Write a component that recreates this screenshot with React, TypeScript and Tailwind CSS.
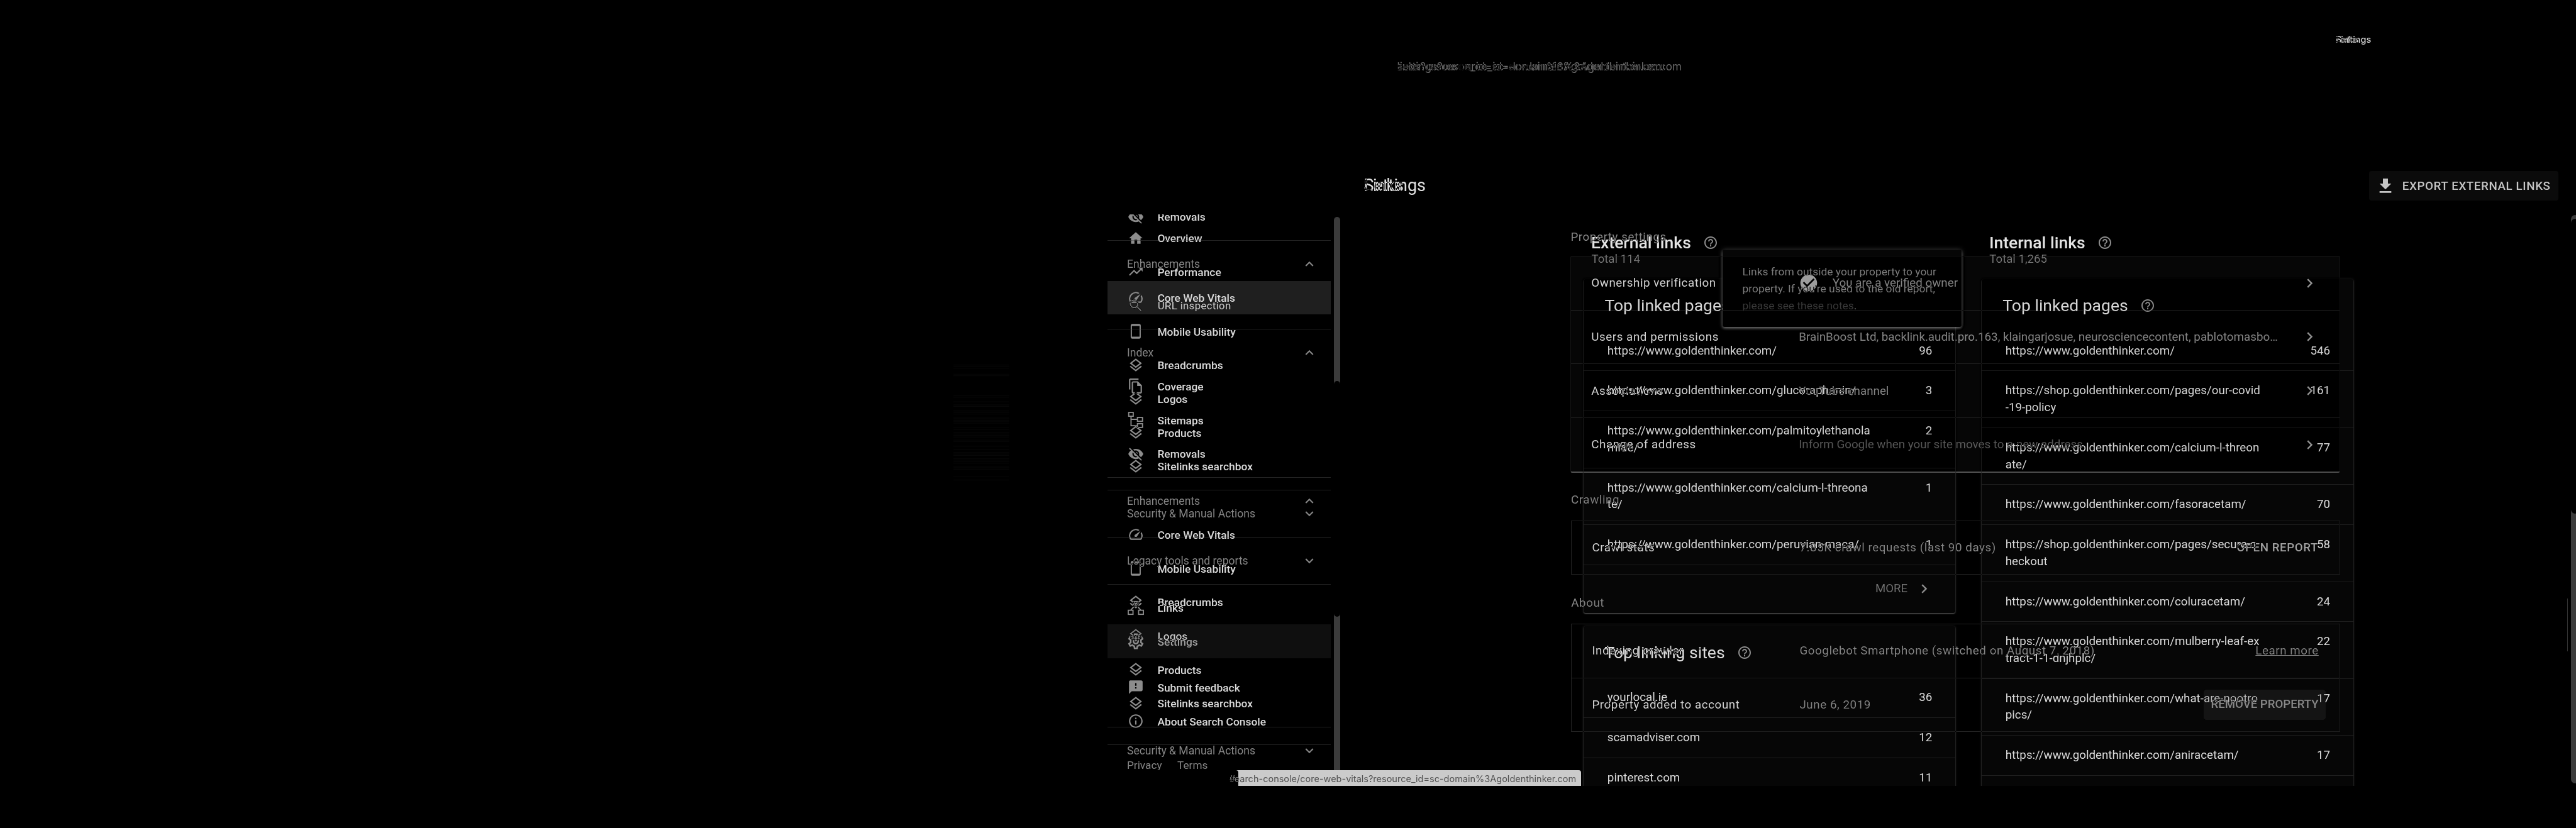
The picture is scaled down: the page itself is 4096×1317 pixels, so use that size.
import type { ReactNode } from "react";
import {
  MdCheckCircle,
  MdChevronRight,
  MdExpandLess,
  MdExpandMore,
  MdFeedback,
  MdFileDownload,
  MdHelpOutline,
  MdHome,
  MdInfoOutline,
  MdOutlineFileCopy,
  MdOutlineLayers,
  MdOutlineSettings,
  MdOutlineSpeed,
  MdSearch,
  MdTrendingUp,
  MdVisibilityOff,
} from "react-icons/md";

/* ---------- icons ---------- */

const SitemapIcon = () => (
  <svg viewBox="0 0 24 24" className="h-full w-full" fill="none" stroke="currentColor" strokeWidth="1.7">
    <rect x="1.6" y="0.9" width="6.6" height="5.6" />
    <rect x="14.4" y="8.3" width="7.4" height="5.6" />
    <rect x="14.4" y="17.4" width="7.4" height="5.6" />
    <path d="M5 6.5V20.4H14.4M5 11.1H14.4" />
  </svg>
);

const LinksIcon = () => (
  <svg viewBox="0 0 24 24" className="h-full w-full" fill="none" stroke="currentColor" strokeWidth="1.7">
    <rect x="8.8" y="2.6" width="6.4" height="6.4" />
    <rect x="0.9" y="15.4" width="7" height="6" />
    <rect x="16.1" y="15.4" width="7" height="6" />
    <path d="M4.6 15.4L9.6 9.6M19.4 15.4L14.4 9.6" />
  </svg>
);

const PhoneIcon = () => (
  <svg viewBox="0 0 24 24" className="h-full w-full" fill="none" stroke="currentColor">
    <rect x="5.4" y="2" width="13" height="20" rx="1.6" strokeWidth="1.8" />
    <path d="M5.4 3.1H18.4M5.4 20.9H18.4" strokeWidth="2" />
  </svg>
);

const full = "h-full w-full";
const ICONS: Record<string, ReactNode> = {
  Overview: <MdHome className={full} />,
  Performance: <MdTrendingUp className={full} />,
  "URL inspection": <MdSearch className={full} />,
  Coverage: <MdOutlineFileCopy className={full} />,
  Sitemaps: <SitemapIcon />,
  Removals: <MdVisibilityOff className={full} />,
  "Core Web Vitals": <MdOutlineSpeed className={full} />,
  "Mobile Usability": <PhoneIcon />,
  Breadcrumbs: <MdOutlineLayers className={full} />,
  Logos: <MdOutlineLayers className={full} />,
  Products: <MdOutlineLayers className={full} />,
  "Sitelinks searchbox": <MdOutlineLayers className={full} />,
  Links: <LinksIcon />,
  Settings: <MdOutlineSettings className="h-full w-full scale-[1.16]" />,
  "Submit feedback": <MdFeedback className={full} />,
  "About Search Console": <MdInfoOutline className={full} />,
};

/* ---------- sidebar ---------- */

function NavItem({ label, tone = "text-[#dadada]" }: { label: string; tone?: string }) {
  return (
    <div className={`flex h-[53.64px] shrink-0 items-center pl-[32px] ${tone}`}>
      <span className="h-[26px] w-[26px] text-[#8c8c8c]">{ICONS[label]}</span>
      <span className="ml-[21.7px] pt-[1.4px] text-[17.4px] font-medium">{label}</span>
    </div>
  );
}

function NavLabel({ label, open = false }: { label: string; open?: boolean }) {
  return (
    <div className="flex h-[53.64px] shrink-0 items-center justify-between pl-[31.3px] pr-[20.6px] text-[#868686]">
      <span className="pt-[1.4px] text-[17.55px]">{label}</span>
      {open ? <MdExpandLess className="h-[26px] w-[26px]" /> : <MdExpandMore className="h-[26px] w-[26px]" />}
    </div>
  );
}

const Divider = () => (
  <div className="h-[21.4px] shrink-0 pt-[10.2px]">
    <div className="h-px bg-[#222222]" />
  </div>
);

const NavItems = ({ labels }: { labels: string[] }) => (
  <>
    {labels.map((l) => (
      <NavItem key={l} label={l} />
    ))}
  </>
);

const ENHANCEMENTS = ["Mobile Usability", "Breadcrumbs", "Logos", "Products", "Sitelinks searchbox"];

function SidebarTop() {
  return (
    <nav className="flex w-[355.4px] shrink-0 flex-col overflow-hidden pt-[10.5px]">
      <NavItems labels={["Overview", "Performance", "URL inspection"]} />
      <Divider />
      <NavLabel label="Index" open />
      <NavItems labels={["Coverage", "Sitemaps", "Removals"]} />
      <Divider />
      <NavLabel label="Enhancements" open />
      <NavItems labels={["Core Web Vitals", ...ENHANCEMENTS]} />
      <Divider />
      <NavLabel label="Security & Manual Actions" />
    </nav>
  );
}

function SidebarBottom() {
  return (
    <nav className="w-[355.4px] shrink-0 overflow-hidden">
      <div className="-mt-[23.3px] flex flex-col">
        <NavItem label="Removals" />
        <Divider />
        <NavLabel label="Enhancements" open />
        <NavItem label="Core Web Vitals" tone="bg-[#1f1f1f] text-[#dadada]" />
        <NavItems labels={ENHANCEMENTS} />
        <Divider />
        <NavLabel label="Security & Manual Actions" />
        <Divider />
        <NavLabel label="Legacy tools and reports" />
        <Divider />
        <NavItem label="Links" />
        <NavItem label="Settings" tone="bg-[#0f0f0f] text-[#a0a0a0]" />
        <div className="h-[19.6px]" />
        <NavItems labels={["Submit feedback", "About Search Console"]} />
        <Divider />
        <div className="flex gap-[24.5px] pl-[31.3px] pt-[9px] text-[17.2px] leading-[26px] text-[#868686]">
          <span>Privacy</span>
          <span>Terms</span>
        </div>
      </div>
    </nav>
  );
}

/* ---------- shared page frame ---------- */

type FrameProps = {
  title: string;
  url: string;
  action?: ReactNode;
  sidebar: ReactNode;
  navThumb: string;
  pageThumb: string;
  status: ReactNode;
  className: string;
  children: ReactNode;
};

function Frame({ title, url, action, sidebar, navThumb, pageThumb, status, className, children }: FrameProps) {
  return (
    <div className={`absolute inset-0 flex flex-col bg-black ${className}`}>
      <div className="flex h-[84.4px] items-center pl-[3714px] pt-[42.2px] font-['Inter'] text-[14.43px] font-medium text-[#d4d4d4]">
        {title}
      </div>
      <div className="flex h-[42.6px] items-center pl-[2221.5px] font-['Inter'] text-[17.09px] text-[#6a6a6a]">{url}</div>
      <div className="flex h-[214.3px] items-center justify-between pl-[2168.4px] pr-[28px] pt-[122.9px]">
        <h1 className="text-[27px] text-[#e0e0e0]">{title}</h1>
        {action}
      </div>
      <div className="relative flex h-[908.8px] overflow-hidden pl-[1760.7px]">
        {sidebar}
        <div className="ml-[5.2px] w-[9.7px] shrink-0">
          <div className={`w-full rounded-full bg-[#3b3b3b] ${navThumb}`} />
        </div>
        <main className="min-w-0 flex-1">{children}</main>
        <div className="w-[8.5px] shrink-0 overflow-hidden">
          <div className={`w-[13px] rounded-full bg-[#3b3b3b] ${pageThumb}`} />
        </div>
        {status}
      </div>
    </div>
  );
}

/* ---------- links report ---------- */

type Row = { lines: string[]; value: string };

const EXTERNAL: Row[] = [
  { lines: ["https://www.goldenthinker.com/"], value: "96" },
  { lines: ["https://www.goldenthinker.com/glucoraphanin/"], value: "3" },
  { lines: ["https://www.goldenthinker.com/palmitoylethanola", "mide/"], value: "2" },
  { lines: ["https://www.goldenthinker.com/calcium-l-threona", "te/"], value: "1" },
  { lines: ["https://www.goldenthinker.com/peruvian-maca/"], value: "1" },
];

const SITES: Row[] = [
  { lines: ["yourlocal.ie"], value: "36" },
  { lines: ["scamadviser.com"], value: "12" },
  { lines: ["pinterest.com"], value: "11" },
];

const INTERNAL: Row[] = [
  { lines: ["https://www.goldenthinker.com/"], value: "546" },
  { lines: ["https://shop.goldenthinker.com/pages/our-covid", "-19-policy"], value: "161" },
  { lines: ["https://www.goldenthinker.com/calcium-l-threon", "ate/"], value: "77" },
  { lines: ["https://www.goldenthinker.com/fasoracetam/"], value: "70" },
  { lines: ["https://shop.goldenthinker.com/pages/secure-c", "heckout"], value: "58" },
  { lines: ["https://www.goldenthinker.com/coluracetam/"], value: "24" },
  { lines: ["https://www.goldenthinker.com/mulberry-leaf-ex", "tract-1-1-dnjhplc/"], value: "22" },
  { lines: ["https://www.goldenthinker.com/what-are-nootro", "pics/"], value: "17" },
  { lines: ["https://www.goldenthinker.com/aniracetam/"], value: "17" },
  { lines: [""], value: "" },
];

const Help = () => <MdHelpOutline className="ml-[19px] h-[24px] w-[24px] shrink-0 text-[#8c8c8c]" />;

function LinksCard({ title, rows, more = false }: { title: string; rows: Row[]; more?: boolean }) {
  return (
    <section className="rounded-[3px] bg-[#060606] shadow-[0_1px_2px_rgba(255,255,255,0.34),0_0_4px_rgba(255,255,255,0.1)]">
      <div className="flex h-[82.8px] items-center pl-[33px] pt-[1.2px] text-[26.5px] text-[#dcdcdc]">
        {title}
        <Help />
      </div>
      {rows.map((r, i) => (
        <div
          key={i}
          className="flex justify-between border-b border-[#1e1e1e] pb-[17.9px] pl-[37.4px] pr-[36.6px] pt-[18px] text-[18.77px] leading-[26.8px] text-[#dadada]"
        >
          <div>
            {r.lines.map((l) => (
              <div key={l} className="min-h-[26.8px]">
                {l}
              </div>
            ))}
          </div>
          <div>{r.value}</div>
        </div>
      ))}
      {more && (
        <div className="flex h-[76.2px] items-center justify-end gap-[12px] pr-[34.7px] text-[18.6px] text-[#6e6e6e]">
          MORE
          <MdChevronRight className="h-[29px] w-[29px] text-[#8c8c8c]" />
        </div>
      )}
    </section>
  );
}

function LinksColumn({ title, total, children }: { title: string; total: string; children: ReactNode }) {
  return (
    <div className="w-[590.4px] shrink-0">
      <div className="pb-[22.1px] pl-[11.6px] pt-[28.3px]">
        <div className="flex h-[32px] items-center text-[26.5px] font-medium text-[#e4e4e4]">
          {title}
          <Help />
        </div>
        <div className="pl-[0.4px] text-[18.6px] leading-[20.2px] text-[#7c7c7c]">{total}</div>
      </div>
      <div className="flex flex-col gap-[20.7px]">{children}</div>
    </div>
  );
}

function LinksPage() {
  return (
    <Frame
      title="Links"
      url="links?resource_id=sc-domain%3Agoldenthinker.com"
      className=""
      action={
        <div className="flex h-[47.8px] w-[300.8px] items-center gap-[10.4px] rounded-[4px] bg-[#0b0b0b] pl-[10.2px] text-[18.77px] font-medium tracking-[0.6px] text-[#c6c6c6]">
          <MdFileDownload className="h-[32px] w-[32px]" />
          <span className="whitespace-nowrap">EXPORT EXTERNAL LINKS</span>
        </div>
      }
      sidebar={<SidebarTop />}
      navThumb="mt-[3.7px] h-[636px]"
      pageThumb="mt-[0.3px] h-[475px]"
      status={
        <div className="absolute left-[1760.7px] top-[884px] h-[25px] w-[208.8px] whitespace-nowrap rounded-tr-[4px] bg-[#cbcbcb] pl-[8.6px] font-['Inter'] text-[14.5px] leading-[27px] text-[#505050]">
          https://search.google.com/#
        </div>
      }
    >
      <div className="flex gap-[42.5px] pl-[387.5px]">
        <LinksColumn title="External links" total="Total 114">
          <LinksCard title="Top linked pages" rows={EXTERNAL} more />
          <LinksCard title="Top linking sites" rows={SITES} />
        </LinksColumn>
        <LinksColumn title="Internal links" total="Total 1,265">
          <LinksCard title="Top linked pages" rows={INTERNAL} />
        </LinksColumn>
      </div>
      {/* help tooltip over the external links card */}
      <div className="absolute left-[2739.1px] top-[56.1px] h-[122.7px] w-[380.2px] rounded-[3px] bg-[#060606] pl-[31.4px] pt-[21.6px] text-[17.4px] leading-[26.9px] text-[#828282] shadow-[0_2px_4px_rgba(255,255,255,0.4),0_0_9px_rgba(255,255,255,0.18)]">
        <div>Links from outside your property to your</div>
        <div>property. If you're used to the old report,</div>
        <div>
          <span className="text-[#3e3e3e]">please see these notes</span>.
        </div>
      </div>
    </Frame>
  );
}

/* ---------- settings page ---------- */

const Chevron = () => <MdChevronRight className="h-[29px] w-[29px] text-[#989898]" />;

function SettingRow({
  label,
  value,
  end,
  className,
}: {
  label: string;
  value: ReactNode;
  end?: ReactNode;
  className: string;
}) {
  return (
    <div className={`flex items-center whitespace-nowrap text-[18.77px] ${className}`}>
      <div className="w-[330px] shrink-0 tracking-[0.56px] text-[#dadada]">{label}</div>
      <div className="flex min-w-0 flex-1 items-center text-[#8a8a8a]">{value}</div>
      {end}
    </div>
  );
}

const row = "h-[84.65px] pl-[31.8px] pr-[32.8px]";
const divided = "h-[85.65px] border-b border-[#222222] pl-[31.8px] pr-[32.8px]";

function SettingsPage() {
  return (
    <Frame
      title="Settings"
      url="settings?resource_id=sc-domain%3Agoldenthinker.com"
      className="mix-blend-difference"
      sidebar={<SidebarBottom />}
      navThumb="mt-[265px] h-[660px]"
      pageThumb="mt-[7px] h-[898px]"
      status={
        <div className="absolute left-[1760.7px] top-[884px] h-[25px] w-[753px] whitespace-nowrap rounded-tr-[4px] bg-[#cbcbcb] pl-[8.6px] font-['Inter'] text-[14.5px] leading-[27px] text-[#505050]">
          https://search.google.com/search-console/core-web-vitals?resource_id=sc-domain%3Agoldenthinker.com
        </div>
      }
    >
      <div className="w-[1589.9px] pl-[366.5px]">
        <div className="flex h-[65.7px] items-center pt-[5.6px] text-[18.77px] tracking-[0.56px] text-[#868686]">
          Property settings
        </div>
        <section className="rounded-[3px] border border-b-2 border-[#161616] border-b-[#525252] bg-[#060606]">
          <SettingRow
            className={divided}
            label="Ownership verification"
            value={
              <>
                <MdCheckCircle className="h-[32px] w-[32px] text-[#a4a4a4]" />
                <span className="ml-[21.6px]">You are a verified owner</span>
              </>
            }
            end={<Chevron />}
          />
          <SettingRow
            className={divided}
            label="Users and permissions"
            value="BrainBoost Ltd, backlink.audit.pro.163, klaingarjosue, neurosciencecontent, pablotomasbo…"
            end={<Chevron />}
          />
          <SettingRow className={divided} label="Associations" value="YouTube channel" end={<Chevron />} />
          <SettingRow
            className={row}
            label="Change of address"
            value={<span className="text-[#5c5c5c]">Inform Google when your site moves to a new address</span>}
            end={<Chevron />}
          />
        </section>
        <div className="flex h-[76.7px] items-center pl-[0.6px] pt-[9.6px] text-[18.77px] tracking-[0.56px] text-[#868686]">
          Crawling
        </div>
        <section className="ml-[0.6px] border border-[#222222]">
          <SettingRow
            className="h-[83.3px] pl-[32.4px] pr-[33.8px]"
            label="Crawl stats"
            value={<span className="tracking-[0.56px]">7.85K crawl requests (last 90 days)</span>}
            end={<span className="font-medium tracking-[0.56px] text-[#a8a8a8]">OPEN REPORT</span>}
          />
        </section>
        <div className="flex h-[78px] items-center pl-[0.8px] pt-[13.4px] text-[18.77px] tracking-[0.56px] text-[#868686]">
          About
        </div>
        <section className="ml-[0.6px] border border-[#222222]">
          <SettingRow
            className="h-[86.4px] border-b border-[#222222] pl-[32.4px] pr-[33px]"
            label="Indexing crawler"
            value={<span className="tracking-[0.56px]">Googlebot Smartphone (switched on August 7, 2018)</span>}
            end={<span className="tracking-[0.56px] text-[#8a8a8a] underline">Learn more</span>}
          />
          <SettingRow
            className="h-[84.4px] pl-[32.4px] pr-[22px]"
            label="Property added to account"
            value={<span className="tracking-[0.56px]">June 6, 2019</span>}
            end={
              <span className="flex h-[48px] w-[193.6px] items-center justify-center rounded-[4px] bg-[#1a1a1a] text-[18.64px] font-medium text-[#8e8e8e]">
                REMOVE PROPERTY
              </span>
            }
          />
        </section>
      </div>
    </Frame>
  );
}

/* ---------- faint striped block on the far left ---------- */

const STRIPES = [
  0, 2.4, 4.9, 14.6, 17, 48.8, 51.2, 58.5, 63.4, 65.8, 73.1, 75.6, 78, 82.9, 85.3, 87.8, 90.2, 92.6, 99.9, 102.4,
  107.3, 109.7, 112.1, 114.6, 119.4, 121.9, 129.2, 134.1, 138.9, 141.4, 143.8, 148.7, 151.1, 153.6, 156, 160.9,
  163.3, 165.8, 177.9, 182.8,
];

const Stripes = () => (
  <svg className="absolute left-[1516px] top-[580px] h-[186px] w-[88.5px]" viewBox="0 0 88.5 186">
    {STRIPES.map((y) => (
      <rect key={y} x="0" y={y} width="88.5" height="1.2" fill="#070707" />
    ))}
  </svg>
);

export default function App() {
  return (
    <div className="relative isolate h-[1317px] w-[4096px] overflow-hidden bg-black font-['Roboto',sans-serif]">
      <LinksPage />
      <SettingsPage />
      <Stripes />
      {/* window edge beside the page scrollbar */}
      <div className="absolute left-[4082px] top-[952px] h-[84px] w-px bg-[#333333]" />
    </div>
  );
}
